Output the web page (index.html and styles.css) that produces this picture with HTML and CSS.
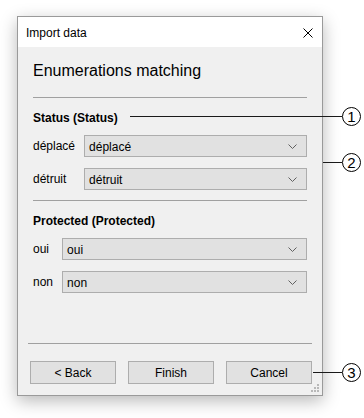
FILE: index.html
```html
<!DOCTYPE html>
<html lang="fr">
<head>
  <meta charset="UTF-8">
  <title>Import data</title>
  <link rel="stylesheet" href="styles.css">
</head>
<body>
  <div class="stage">
    <div class="dialog">
      <div class="titlebar">
        <span class="title">Import data</span>
        <svg class="close" width="10" height="10" viewBox="0 0 10 10">
          <path d="M0.5 0.5 L9.5 9.5 M9.5 0.5 L0.5 9.5" stroke="#000" stroke-width="1" fill="none"/>
        </svg>
      </div>

      <div class="content">
        <h1>Enumerations matching</h1>
        <div class="sep head-sep"></div>

        <div class="group">
          <h2>Status (Status)</h2>
          <div class="rows">
            <span class="lbl">déplacé</span>
            <div class="combo">déplacé<svg class="arrow" width="9" height="5" viewBox="0 0 9 5"><path d="M0.5 0.5 L4.5 4.5 L8.5 0.5" stroke="#606060" fill="none"/></svg></div>
            <span class="lbl">détruit</span>
            <div class="combo">détruit<svg class="arrow" width="9" height="5" viewBox="0 0 9 5"><path d="M0.5 0.5 L4.5 4.5 L8.5 0.5" stroke="#606060" fill="none"/></svg></div>
          </div>
        </div>
        <div class="sep"></div>

        <div class="group">
          <h2>Protected (Protected)</h2>
          <div class="rows">
            <span class="lbl">oui</span>
            <div class="combo">oui<svg class="arrow" width="9" height="5" viewBox="0 0 9 5"><path d="M0.5 0.5 L4.5 4.5 L8.5 0.5" stroke="#606060" fill="none"/></svg></div>
            <span class="lbl">non</span>
            <div class="combo">non<svg class="arrow" width="9" height="5" viewBox="0 0 9 5"><path d="M0.5 0.5 L4.5 4.5 L8.5 0.5" stroke="#606060" fill="none"/></svg></div>
          </div>
        </div>
      </div>

      <div class="footer">
        <div class="sep"></div>
        <div class="buttons">
          <button class="btn">&lt; Back</button>
          <button class="btn">Finish</button>
          <button class="btn">Cancel</button>
        </div>
      </div>

      <svg class="grip" width="8" height="8" viewBox="0 0 8 8">
        <rect x="6" y="0" width="2" height="2" fill="#b8b8b8"/>
        <rect x="3" y="3" width="2" height="2" fill="#b8b8b8"/>
        <rect x="6" y="3" width="2" height="2" fill="#b8b8b8"/>
        <rect x="0" y="6" width="2" height="2" fill="#b8b8b8"/>
        <rect x="3" y="6" width="2" height="2" fill="#b8b8b8"/>
        <rect x="6" y="6" width="2" height="2" fill="#b8b8b8"/>
      </svg>
    </div>

    <!-- callouts -->
    <div class="callout c1"><span class="leader"></span><span class="num">1</span></div>
    <div class="callout c2"><span class="leader"></span><span class="num">2</span></div>
    <div class="callout c3"><span class="leader"></span><span class="num">3</span></div>
  </div>
</body>
</html>
```

FILE: styles.css
```css
html, body { margin: 0; background: #fff; }
body { font-family: "Liberation Sans", Arial, sans-serif; font-size: 12px; color: #000; }

.stage { position: relative; width: 364px; height: 418px; padding: 16px 0 0 17px; box-sizing: border-box; }

.dialog {
  position: relative;
  width: 306px; height: 380px;
  box-sizing: border-box;
  border: 1px solid #9a9a9a;
  background: #f0f0f0;
  box-shadow: 0 5px 16px rgba(0, 0, 0, 0.28);
  display: flex; flex-direction: column;
}

.titlebar {
  height: 30px; background: #fff;
  display: flex; align-items: center; justify-content: space-between;
  padding: 0 9px 0 8px;
}
.title { font-size: 12px; margin-top: 1px; }
.close { display: block; margin-top: 1px; }

.content { flex: 1; padding: 15px 15px 0 15px; }
h1 { margin: 0; font-size: 16px; font-weight: normal; line-height: 18px; }
.sep { height: 1px; background: #a0a0a0; }
.head-sep { margin-top: 17px; }
.group { padding: 13px 0 10px; }
h2 { margin: 0 0 10px; font-size: 12px; font-weight: bold; line-height: 14px; }

.rows { display: grid; grid-template-columns: auto 1fr; column-gap: 9px; row-gap: 11px; align-items: center; }
.lbl { line-height: 14px; margin-top: -1px; }
.combo {
  height: 22px; box-sizing: border-box;
  border: 1px solid #adadad; background: #e1e1e1;
  padding: 1px 9px 0 4px;
  display: flex; align-items: center; justify-content: space-between;
  line-height: 14px;
}
.arrow { display: block; margin-top: -1px; }

.footer { padding: 0 10px 11px 10px; }
.buttons { display: flex; justify-content: flex-end; gap: 12px; margin-top: 17px; }
.btn {
  width: 86px; height: 23px;
  border: 1px solid #adadad; background: #e1e1e1;
  font-family: inherit; font-size: 12px; color: #000;
  padding: 0; margin: 0;
}

.grip { position: absolute; right: 3px; bottom: 3px; }

.callout { position: absolute; display: flex; align-items: center; height: 18px; }
.leader { height: 1px; background: #1a1a1a; }
.num {
  width: 17px; height: 17px; border: 1.3px solid #000; border-radius: 50%;
  font-size: 15px; line-height: 17px; text-align: center;
}
.c1 { left: 130px; top: 107px; }
.c1 .leader { width: 212px; }
.c2 { left: 323px; top: 153px; }
.c2 .leader { width: 19px; }
.c3 { left: 313px; top: 363px; }
.c3 .leader { width: 29px; }
```
